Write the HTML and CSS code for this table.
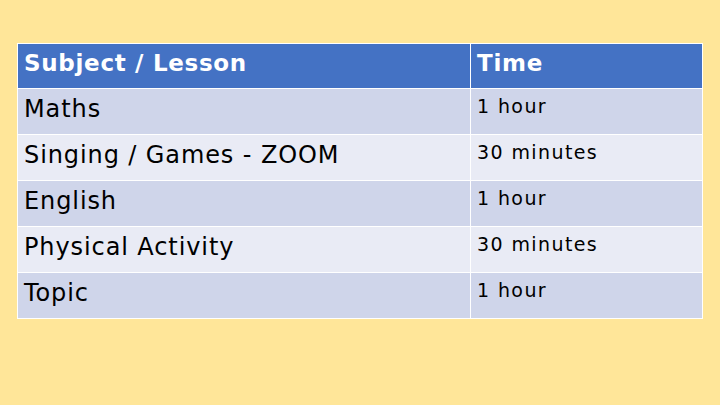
FILE: index.html
```html
<!DOCTYPE html>
<html>
<head>
<meta charset="utf-8">
<link rel="stylesheet" href="styles.css">
</head>
<body>
<div class="page">
<table class="schedule">
  <thead>
    <tr><th class="subject">Subject / Lesson</th><th class="time">Time</th></tr>
  </thead>
  <tbody>
    <tr class="odd"><td class="subject">Maths</td><td class="time">1 hour</td></tr>
    <tr class="even"><td class="subject">Singing / Games - ZOOM</td><td class="time">30 minutes</td></tr>
    <tr class="odd"><td class="subject">English</td><td class="time">1 hour</td></tr>
    <tr class="even"><td class="subject">Physical Activity</td><td class="time">30 minutes</td></tr>
    <tr class="odd"><td class="subject">Topic</td><td class="time">1 hour</td></tr>
  </tbody>
</table>
</div>
</body>
</html>
```
FILE: styles.css
```css
html, body {
  margin: 0;
  padding: 0;
  background: #FFE699;
}
.page {
  width: 720px;
  height: 405px;
  padding: 43px 0 0 17px;
  box-sizing: border-box;
}
.schedule {
  width: 686px;
  border-collapse: collapse;
  font-family: "DejaVu Sans", "Open Sans", sans-serif;
  color: #000;
}
.schedule th, .schedule td {
  border: 1px solid #fff;
  vertical-align: top;
  text-align: left;
  padding: 0 6px;
  box-sizing: border-box;
}
.schedule th {
  background: #4472C4;
  color: #fff;
  font-weight: 700;
  font-size: 23px;
  letter-spacing: 0.7px;
  height: 45px;
  padding-top: 4px;
  line-height: 30px;
}
.schedule td {
  height: 46px;
}
.schedule td.subject {
  width: 453px;
  font-size: 24px;
  letter-spacing: 0.9px;
  line-height: 30px;
  padding-top: 5px;
}
.schedule td.time {
  font-size: 19px;
  letter-spacing: 1.4px;
  line-height: 26px;
  padding-top: 4px;
}
.odd { background: #CFD5EA; }
.even { background: #E9EBF5; }
```
